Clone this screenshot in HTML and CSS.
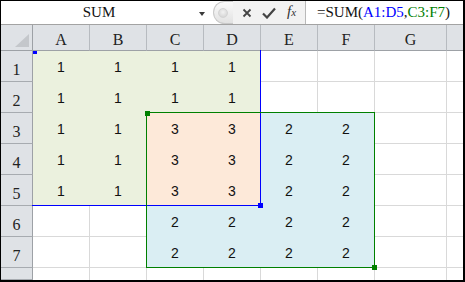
FILE: index.html
```html
<!DOCTYPE html>
<html lang="en">
<head>
  <meta charset="UTF-8" />
  <title>SUM</title>
  <link rel="stylesheet" href="styles.css">
</head>
<body>

<div class="window">
  <div class="formula-bar">
    <div class="name-box">
      <span class="name">SUM</span>
      <span class="arrow"></span>
    </div>
    <div class="grip"><span class="grip-dot"></span></div>
    <div class="tools">
      <svg class="tool cancel" width="10" height="10" viewBox="0 0 10 10">
        <path d="M1.5 1.5 L8.5 8.5 M8.5 1.5 L1.5 8.5" stroke="#444" stroke-width="1.8" fill="none"/>
      </svg>
      <svg class="tool enter" width="14" height="12" viewBox="0 0 14 12">
        <path d="M1 6.5 L5 10.5 L13 1.5" stroke="#444" stroke-width="2.2" fill="none"/>
      </svg>
      <span class="tool fx"><i>f</i><span class="fx-x">x</span></span>
    </div>
    <div class="formula">=SUM(<span class="ref-a">A1:D5</span>,<span class="ref-c">C3:F7</span>)</div>
  </div>

  <div class="sheet">
    <div class="row head">
      <div class="h corner">
        <svg width="14" height="13" viewBox="0 0 14 13"><polygon points="14,0 14,13 0,13" fill="#c4c7cb"/></svg>
      </div>
      <div class="h col">A</div>
      <div class="h col">B</div>
      <div class="h col">C</div>
      <div class="h col">D</div>
      <div class="h col">E</div>
      <div class="h col">F</div>
      <div class="h col">G</div>
      <div class="h col last"></div>
    </div>

    <div class="row">
      <div class="h rh">1</div>
      <div class="c a">1</div><div class="c a">1</div><div class="c a">1</div><div class="c a">1</div>
      <div class="c"></div><div class="c"></div><div class="c"></div><div class="c last"></div>
    </div>
    <div class="row">
      <div class="h rh">2</div>
      <div class="c a">1</div><div class="c a">1</div><div class="c a">1</div><div class="c a">1</div>
      <div class="c"></div><div class="c"></div><div class="c"></div><div class="c last"></div>
    </div>
    <div class="row">
      <div class="h rh">3</div>
      <div class="c a">1</div><div class="c a">1</div><div class="c both">3</div><div class="c both">3</div>
      <div class="c b">2</div><div class="c b">2</div><div class="c"></div><div class="c last"></div>
    </div>
    <div class="row">
      <div class="h rh">4</div>
      <div class="c a">1</div><div class="c a">1</div><div class="c both">3</div><div class="c both">3</div>
      <div class="c b">2</div><div class="c b">2</div><div class="c"></div><div class="c last"></div>
    </div>
    <div class="row">
      <div class="h rh">5</div>
      <div class="c a">1</div><div class="c a">1</div><div class="c both">3</div><div class="c both">3</div>
      <div class="c b">2</div><div class="c b">2</div><div class="c"></div><div class="c last"></div>
    </div>
    <div class="row">
      <div class="h rh">6</div>
      <div class="c"></div><div class="c"></div><div class="c b">2</div><div class="c b">2</div>
      <div class="c b">2</div><div class="c b">2</div><div class="c"></div><div class="c last"></div>
    </div>
    <div class="row">
      <div class="h rh">7</div>
      <div class="c"></div><div class="c"></div><div class="c b">2</div><div class="c b">2</div>
      <div class="c b">2</div><div class="c b">2</div><div class="c"></div><div class="c last"></div>
    </div>
    <div class="row end">
      <div class="h rh"></div>
      <div class="c"></div><div class="c"></div><div class="c"></div><div class="c"></div>
      <div class="c"></div><div class="c"></div><div class="c"></div><div class="c last"></div>
    </div>

    <!-- range highlights drawn over the cells -->
    <div class="range range-a"></div>
    <div class="handle handle-a1"></div>
    <div class="handle handle-a2"></div>
    <div class="range range-c"></div>
    <div class="handle handle-c1"></div>
    <div class="handle handle-c2"></div>
  </div>
</div>

</body>
</html>
```

FILE: styles.css
```css
body {
  margin: 0;
  padding: 0;
  background: #fff;
}

.window {
  width: 465px;
  height: 282px;
  box-sizing: border-box;
  border-style: solid;
  border-color: #000;
  border-width: 1px 2px 2px 1px;
  display: flex;
  flex-direction: column;
  overflow: hidden;
  background: #fff;
}

/* formula bar */

.formula-bar {
  height: 24px;
  box-sizing: border-box;
  border-bottom: 1px solid #a3a3a3;
  display: flex;
  flex-shrink: 0;
}

.name-box {
  width: 212px;
  display: flex;
  align-items: center;
  background: #fff;
}

.name {
  flex: 1;
  text-align: center;
  font-family: "Liberation Serif", serif;
  font-size: 15px;
  color: #111;
  padding-left: 2px;
}

.arrow {
  width: 0;
  height: 0;
  border-left: 3px solid transparent;
  border-right: 3px solid transparent;
  border-top: 4px solid #3a3a3a;
  margin: 2px 8px 0 4px;
}

.grip {
  width: 20px;
  box-sizing: border-box;
  border: 1px solid #c9c9c9;
  border-right: none;
  border-radius: 12px 0 0 12px;
  background: linear-gradient(#fafafa, #e2e2e2);
  display: flex;
  align-items: center;
  padding-left: 4px;
}

.grip-dot {
  width: 8px;
  height: 8px;
  border-radius: 50%;
  background: radial-gradient(circle at 50% 40%, #f2f2f2, #cfcfcf);
  border: 1px solid #d4d4d4;
}

.tools {
  width: 73px;
  background: #f2f2f2;
  border-right: 1px solid #b9b9b9;
  display: flex;
  align-items: center;
  padding-left: 9px;
  gap: 10px;
  box-sizing: border-box;
}

.tool {
  display: block;
}

.fx {
  font-family: "Liberation Serif", serif;
  font-size: 15px;
  color: #333;
  margin-left: 1px;
  margin-top: -2px;
}

.fx-x {
  font-size: 11px;
  font-style: italic;
}

.formula {
  flex: 1;
  display: flex;
  align-items: center;
  padding-left: 11px;
  font-family: "Liberation Serif", serif;
  font-size: 15px;
  color: #111;
  white-space: nowrap;
}

.ref-a {
  color: #0000ff;
}

.ref-c {
  color: #008000;
}

/* sheet */

.sheet {
  flex: 1;
  position: relative;
  display: flex;
  flex-direction: column;
}

.row {
  display: grid;
  grid-template-columns: 32px repeat(6, 57px) 72px 1fr;
  height: 31px;
  flex-shrink: 0;
}

.row.head {
  height: 26px;
}

.row.end {
  flex: 1;
}

.h {
  background: #dfe2e6;
  box-sizing: border-box;
  font-family: "Liberation Serif", serif;
  font-size: 16px;
  color: #222;
  display: flex;
  justify-content: center;
  align-items: flex-end;
  line-height: 16px;
}

.corner {
  border-right: 1px solid #9da1a6;
  border-bottom: 1px solid #9da1a6;
  align-items: flex-end;
  justify-content: flex-end;
  padding: 0 3px 3px 0;
}

.col {
  border-right: 1px solid #b7bbc0;
  border-bottom: 1px solid #9da1a6;
  padding-bottom: 2px;
}

.rh {
  border-right: 1px solid #9da1a6;
  border-bottom: 1px solid #a7abb0;
  padding-bottom: 3px;
}

.c {
  box-sizing: border-box;
  border-right: 1px solid #d9d9d9;
  border-bottom: 1px solid #d9d9d9;
  display: flex;
  align-items: center;
  justify-content: center;
  font-family: "Liberation Sans", Arial, sans-serif;
  font-size: 14px;
  color: #111;
  padding-top: 1px;
}

.c.a {
  background: #ebf1de;
  border-color: transparent;
}

.c.both {
  background: #fde9d9;
  border-color: transparent;
}

.c.b {
  background: #daeef3;
  border-color: transparent;
}

.last {
  border-right: none;
}

.row.end .c {
  border-bottom: none;
}

/* range outlines */

.range {
  position: absolute;
  box-sizing: border-box;
  pointer-events: none;
}

.range-a {
  left: 31px;
  top: 25px;
  width: 229px;
  height: 156px;
  border-right: 1px solid #0000ff;
  border-bottom: 1px solid #0000ff;
}

.range-c {
  left: 145px;
  top: 87px;
  width: 229px;
  height: 156px;
  border: 1px solid #008000;
}

.handle {
  position: absolute;
  width: 5px;
  height: 5px;
}

.handle-a1 {
  left: 32px;
  top: 26px;
  width: 4px;
  height: 3px;
  background: #0000ff;
}

.handle-a2 {
  left: 257px;
  top: 178px;
  background: #0000ff;
}

.handle-c1 {
  left: 144px;
  top: 86px;
  background: #008000;
}

.handle-c2 {
  left: 371px;
  top: 240px;
  background: #008000;
}
```
